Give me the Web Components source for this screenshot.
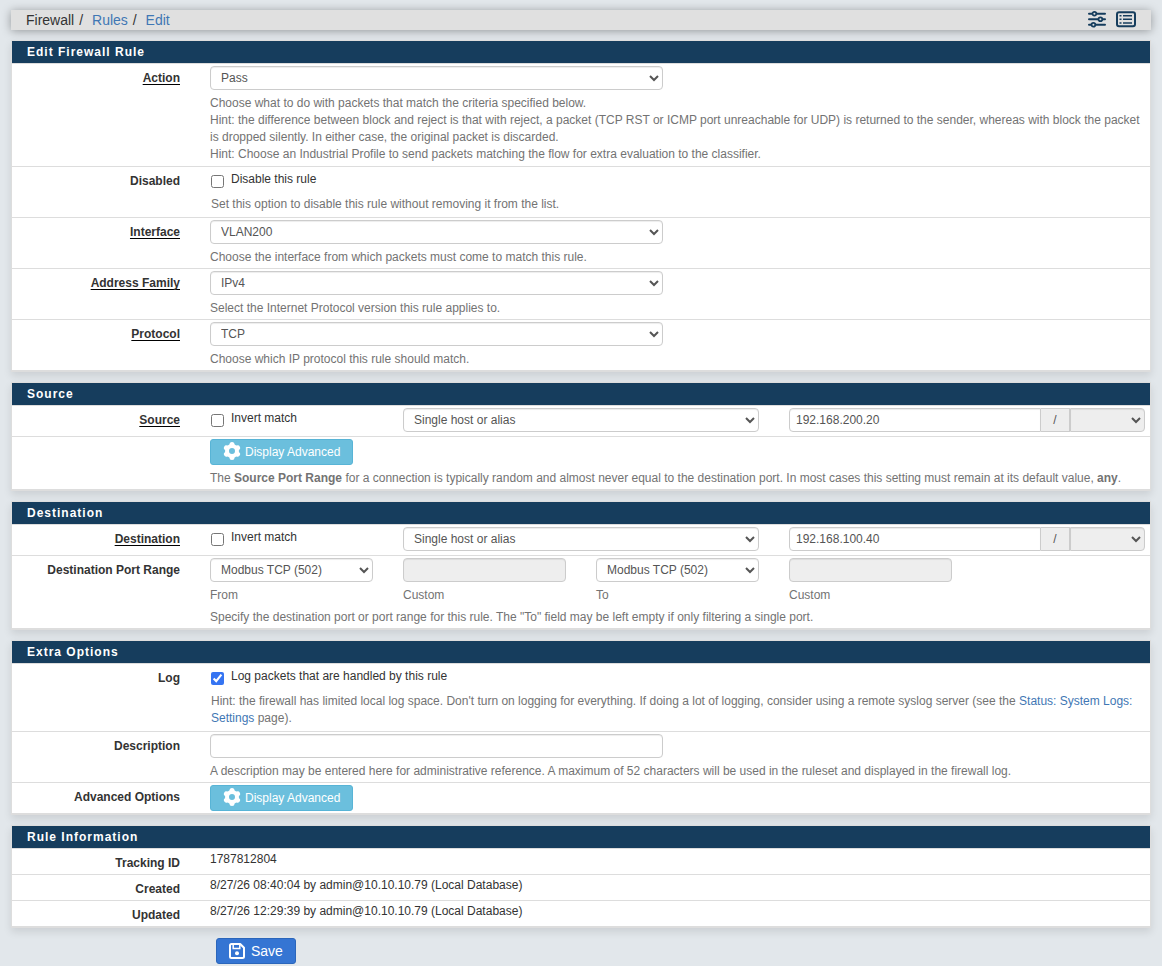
<!DOCTYPE html>
<html lang="en">
<head>
<meta charset="utf-8">
<meta name="viewport" content="width=device-width, initial-scale=1">
<title>Firewall: Rules: Edit</title>
<style>
    :root {
        --color-page: #e2e7eb;
        --color-heading: #163d5d;
        --color-line: #ddd;
        --color-text: #333;
        --color-help: #737373;
        --color-input: #555;
        --color-link: #3f77b4;
        --color-disabled: #eee;
        --input-border: 1px solid #ccc;
        --input-shadow: inset 0 1px 1px rgba(0, 0, 0, 0.075);
    }

    body {
        margin: 0;
        padding: 10px 11px 0;
        background: var(--color-page);
        color: var(--color-text);
        font: 12px/17px "Liberation Sans", Arial, sans-serif;
    }

    form {
        margin: 0;
    }

    a {
        color: var(--color-link);
        text-decoration: none;
    }
</style>
</head>
<body>
    <page-header>
        <span>Firewall</span>
        <a href="#rules">Rules</a>
        <a href="#edit">Edit</a>
    </page-header>

    <form>
        <form-panel heading="Edit Firewall Rule">
            <form-row spacious>
                <label slot="label" class="required" for="action">Action</label>
                <select id="action"><option>Pass</option><option>Block</option><option>Reject</option></select>
                <help-text>Choose what to do with packets that match the criteria specified below.<br>Hint: the difference between block and reject is that with reject, a packet (TCP RST or ICMP port unreachable for UDP) is returned to the sender, whereas with block the packet is dropped silently. In either case, the original packet is discarded.<br>Hint: Choose an Industrial Profile to send packets matching the flow for extra evaluation to the classifier.</help-text>
            </form-row>
            <form-row>
                <span slot="label">Disabled</span>
                <check-field class="full">Disable this rule
                    <help-text slot="help">Set this option to disable this rule without removing it from the list.</help-text>
                </check-field>
            </form-row>
            <form-row>
                <label slot="label" class="required" for="interface">Interface</label>
                <select id="interface"><option>VLAN200</option><option>WAN</option><option>LAN</option></select>
                <help-text>Choose the interface from which packets must come to match this rule.</help-text>
            </form-row>
            <form-row>
                <label slot="label" class="required" for="ipprotocol">Address Family</label>
                <select id="ipprotocol"><option>IPv4</option><option>IPv6</option><option>IPv4+IPv6</option></select>
                <help-text>Select the Internet Protocol version this rule applies to.</help-text>
            </form-row>
            <form-row>
                <label slot="label" class="required" for="proto">Protocol</label>
                <select id="proto"><option>TCP</option><option>UDP</option><option>Any</option></select>
                <help-text>Choose which IP protocol this rule should match.</help-text>
            </form-row>
        </form-panel>

        <form-panel heading="Source">
            <form-row>
                <label slot="label" class="required" for="srctype">Source</label>
                <check-field>Invert match</check-field>
                <select id="srctype" class="wide"><option>Single host or alias</option><option>Network</option><option>any</option></select>
                <address-field label="Source address" value="192.168.200.20"></address-field>
            </form-row>
            <form-row>
                <icon-button class="full" icon="gear">Display Advanced</icon-button>
                <help-text>The <b>Source Port Range</b> for a connection is typically random and almost never equal to the destination port. In most cases this setting must remain at its default value, <b>any</b>.</help-text>
            </form-row>
        </form-panel>

        <form-panel heading="Destination">
            <form-row>
                <label slot="label" class="required" for="dsttype">Destination</label>
                <check-field>Invert match</check-field>
                <select id="dsttype" class="wide"><option>Single host or alias</option><option>Network</option><option>any</option></select>
                <address-field label="Destination address" value="192.168.100.40"></address-field>
            </form-row>
            <form-row>
                <span slot="label">Destination Port Range</span>
                <port-field label="From" value="Modbus TCP (502)"></port-field>
                <port-field label="Custom"></port-field>
                <port-field label="To" value="Modbus TCP (502)"></port-field>
                <port-field label="Custom"></port-field>
                <help-text>Specify the destination port or port range for this rule. The "To" field may be left empty if only filtering a single port.</help-text>
            </form-row>
        </form-panel>

        <form-panel heading="Extra Options">
            <form-row>
                <span slot="label">Log</span>
                <check-field class="full" checked>Log packets that are handled by this rule
                    <help-text slot="help">Hint: the firewall has limited local log space. Don't turn on logging for everything. If doing a lot of logging, consider using a remote syslog server (see the <a href="#syslog">Status: System Logs: Settings</a> page).</help-text>
                </check-field>
            </form-row>
            <form-row>
                <label slot="label" for="descr">Description</label>
                <input id="descr" type="text" maxlength="52">
                <help-text>A description may be entered here for administrative reference. A maximum of 52 characters will be used in the ruleset and displayed in the firewall log.</help-text>
            </form-row>
            <form-row>
                <span slot="label">Advanced Options</span>
                <icon-button class="full" icon="gear">Display Advanced</icon-button>
            </form-row>
        </form-panel>

        <form-panel heading="Rule Information">
            <form-row compact>
                <span slot="label">Tracking ID</span>
                <span class="full">1787812804</span>
            </form-row>
            <form-row compact>
                <span slot="label">Created</span>
                <span class="full">8/27/26 08:40:04 by admin@10.10.10.79 (Local Database)</span>
            </form-row>
            <form-row compact>
                <span slot="label">Updated</span>
                <span class="full">8/27/26 12:29:39 by admin@10.10.10.79 (Local Database)</span>
            </form-row>
        </form-panel>

        <form-actions>
            <icon-button icon="save" primary>Save</icon-button>
        </form-actions>
    </form>

<script>
// Shared by every element that draws a text box or a drop-down
const controlStyles = `
    select, input:not([type=checkbox]) {
        box-sizing: border-box;
        width: 100%;
        min-width: 0;
        height: 24px;
        margin: 0;
        padding: 2px 6px;
        border: var(--input-border);
        border-radius: 4px;
        background-color: #fff;
        box-shadow: var(--input-shadow);
        color: var(--color-input);
        font: inherit;
    }

    select:disabled, input:disabled {
        background-color: var(--color-disabled);
        opacity: 1;
    }
`;

const icons = {
    gear: `<svg viewBox="0 0 20 20" width="20" height="20" aria-hidden="true">
        <g fill="none" stroke="currentColor">
            <circle cx="10" cy="10" r="5" stroke-width="4"/>
            <path stroke-width="5" stroke-linecap="round" d="M10 3.500v.5M10 16v.5M4.400 6.800l.4.200M15.200 13l.4.200M4.400 13.200l.4-.2M15.200 7l.4-.2"/>
        </g>
    </svg>`,
    save: `<svg viewBox="0 0 16 16" width="16" height="16" aria-hidden="true">
        <path fill="none" stroke="currentColor" stroke-width="2" stroke-linejoin="round" d="M2.500 1h8.700L15 4.800v8.700a1.500 1.500 0 0 1-1.500 1.500h-11A1.500 1.500 0 0 1 1 13.500v-11A1.500 1.500 0 0 1 2.500 1z"/>
        <path fill="none" stroke="currentColor" stroke-width="1.500" d="M4.200 1.500v4h6.600v-4"/>
        <circle cx="8" cy="10.200" r="2" fill="currentColor"/>
    </svg>`
};

class PageHeader extends HTMLElement {
    constructor() {
        super();
        this.attachShadow({ mode: 'open' });
        this.shadowRoot.innerHTML = `
            <style>
                :host {
                    display: flex;
                    align-items: center;
                    justify-content: space-between;
                    height: 20px;
                    margin-bottom: 10px;
                    padding: 0 15px;
                    background: #e0e0e0;
                    box-shadow: 0 1px 10px rgba(0, 0, 0, 0.35);
                    font-size: 14px;
                    line-height: 20px;
                }

                nav, .tools {
                    display: flex;
                }

                .tools {
                    gap: 9px;
                    color: var(--color-heading);
                }

                .tools a {
                    display: flex;
                    color: inherit;
                }

                .crumb + .crumb::before {
                    content: "/\\00a0";
                    padding: 0 5px;
                    color: var(--color-text);
                }
            </style>
            <nav aria-label="Breadcrumb"></nav>
            <div class="tools">
                <a href="#settings" aria-label="Related settings">
                    <svg viewBox="0 0 20 18" width="20" height="18" fill="none" stroke="currentColor" stroke-width="2" stroke-linecap="round">
                        <path d="M2 2.800h3M10 2.800h8M2 8.300h9M16 8.300h2M2 13.800h2M9 13.800h9"/>
                        <g stroke-width="1.800"><circle cx="7.400" cy="2.800" r="1.900"/><circle cx="13.400" cy="8.300" r="1.900"/><circle cx="6.400" cy="13.800" r="1.900"/></g>
                    </svg>
                </a>
                <a href="#logs" aria-label="Related log entries">
                    <svg viewBox="0 0 20 18" width="20" height="18" fill="none" stroke="currentColor">
                        <rect x="1" y="1.200" width="18" height="14" rx="2" stroke-width="2"/>
                        <path stroke-width="1.500" d="M7 4.700h9M7 8.300h9M7 11.900h9M3.500 4.700h2M3.500 8.300h2M3.500 11.900h2"/>
                    </svg>
                </a>
            </div>
        `;
    }

    connectedCallback() {
        // One slot per crumb, so that the separators can stay in here
        const nav = this.shadowRoot.querySelector('nav');
        [...this.children].forEach((child, i) => {
            child.slot = `crumb-${i}`;
            const crumb = document.createElement('span');
            crumb.className = 'crumb';
            crumb.innerHTML = `<slot name="crumb-${i}"></slot>`;
            nav.appendChild(crumb);
        });
    }
}

class FormPanel extends HTMLElement {
    constructor() {
        super();
        this.attachShadow({ mode: 'open' });
        this.shadowRoot.innerHTML = `
            <style>
                :host {
                    display: block;
                    margin-bottom: 10px;
                    border: 1px solid var(--color-line);
                    background: #fff;
                    box-shadow: 0 4px 8px rgba(0, 0, 0, 0.1);
                }

                h2 {
                    margin: 0;
                    padding: 0 15px;
                    border-bottom: 1px solid var(--color-line);
                    background: var(--color-heading);
                    background-clip: padding-box;
                    color: #fff;
                    font-size: 12px;
                    line-height: 22px;
                    letter-spacing: 1px;
                }
            </style>
            <h2></h2>
            <slot></slot>
        `;
    }

    connectedCallback() {
        this.shadowRoot.querySelector('h2').textContent = this.getAttribute('heading');
    }
}

class FormRow extends HTMLElement {
    constructor() {
        super();
        this.attachShadow({ mode: 'open' });
        this.shadowRoot.innerHTML = `
            <style>
                :host {
                    display: grid;
                    grid-template-columns: repeat(6, 1fr);
                    column-gap: 30px;
                    box-sizing: border-box;
                    min-height: 31px;
                    padding: 2px 5px;
                    border-bottom: 1px solid var(--color-line);
                }

                :host([compact]) {
                    min-height: 26px;
                }

                :host([spacious]) {
                    padding-bottom: 3px;
                }

                .label {
                    padding-top: 4px;
                    text-align: right;
                    font-weight: bold;
                }

                .content {
                    grid-column: 2 / -1;
                    display: grid;
                    grid-template-columns: repeat(10, 1fr);
                    column-gap: 30px;
                    align-items: start;
                    align-content: start;
                }

                ::slotted(.required) {
                    text-decoration: underline #000 1px;
                    text-underline-offset: 2px;
                    text-decoration-skip-ink: none;
                }

                ::slotted(select), ::slotted(input) {
                    grid-column: span 5;
                    box-sizing: border-box;
                    width: 100%;
                    height: 24px;
                    margin: 0;
                    padding: 2px 6px;
                    border: var(--input-border);
                    border-radius: 4px;
                    background-color: #fff;
                    box-shadow: var(--input-shadow);
                    color: var(--color-input);
                    font: inherit;
                }

                ::slotted(.wide), ::slotted(address-field) {
                    grid-column: span 4;
                }

                ::slotted(check-field), ::slotted(port-field) {
                    grid-column: span 2;
                }

                ::slotted(help-text), ::slotted(.full) {
                    grid-column: 1 / -1;
                }
            </style>
            <div class="label"><slot name="label"></slot></div>
            <div class="content"><slot></slot></div>
        `;
    }
}

class HelpText extends HTMLElement {
    constructor() {
        super();
        this.attachShadow({ mode: 'open' });
        this.shadowRoot.innerHTML = `
            <style>
                :host {
                    display: block;
                    margin-top: 5px;
                    color: var(--color-help);
                }
            </style>
            <slot></slot>
        `;
    }
}

class CheckField extends HTMLElement {
    constructor() {
        super();
        this.attachShadow({ mode: 'open' });
        this.shadowRoot.innerHTML = `
            <style>
                :host {
                    display: block;
                    padding-left: 1px;
                }

                label {
                    display: flex;
                    align-items: flex-start;
                    gap: 7px;
                    height: 22px;
                }

                input {
                    width: 13px;
                    height: 13px;
                    margin: 6px 0 0;
                    accent-color: #3574f2;
                }

                span {
                    padding-top: 2px;
                }

                ::slotted(help-text) {
                    margin-bottom: 2px;
                }
            </style>
            <label><input type="checkbox"><span><slot></slot></span></label>
            <slot name="help"></slot>
        `;
    }

    connectedCallback() {
        this.shadowRoot.querySelector('input').checked = this.hasAttribute('checked');
    }
}

class AddressField extends HTMLElement {
    constructor() {
        super();
        this.attachShadow({ mode: 'open' });
        this.shadowRoot.innerHTML = `
            <style>
                ${controlStyles}

                :host {
                    display: flex;
                }

                input:not([type=checkbox]) {
                    flex: 1;
                    border-radius: 4px 0 0 4px;
                }

                span {
                    box-sizing: border-box;
                    flex: 0 0 29px;
                    border: var(--input-border);
                    border-left: 0;
                    background: var(--color-disabled);
                    color: var(--color-input);
                    line-height: 22px;
                    text-align: center;
                }

                select {
                    flex: 0 0 75px;
                    border-radius: 0 4px 4px 0;
                }
            </style>
            <input type="text"><span>/</span><select disabled></select>
        `;
    }

    connectedCallback() {
        const label = this.getAttribute('label');
        const input = this.shadowRoot.querySelector('input');
        input.value = this.getAttribute('value');
        input.setAttribute('aria-label', label);
        this.shadowRoot.querySelector('select').setAttribute('aria-label', `${label} mask`);
    }
}

// A drop-down when it has a value, otherwise a disabled box for a custom port
class PortField extends HTMLElement {
    constructor() {
        super();
        this.attachShadow({ mode: 'open' });
    }

    connectedCallback() {
        const value = this.getAttribute('value');
        const control = value
            ? `<select id="port"><option>${value}</option><option>(other)</option></select>`
            : '<input id="port" type="text" disabled>';

        this.shadowRoot.innerHTML = `
            <style>
                ${controlStyles}

                :host {
                    display: block;
                }

                label {
                    display: block;
                    margin-top: 5px;
                    color: var(--color-help);
                }
            </style>
            ${control}
            <label for="port">${this.getAttribute('label')}</label>
        `;
    }
}

class IconButton extends HTMLElement {
    constructor() {
        super();
        this.attachShadow({ mode: 'open' });
    }

    connectedCallback() {
        this.shadowRoot.innerHTML = `
            <style>
                :host {
                    display: flex;
                }

                button {
                    display: flex;
                    align-items: center;
                    gap: 3px;
                    height: 26px;
                    margin: 0;
                    padding: 0 12px 0 11px;
                    border: 1px solid #58b4d6;
                    border-radius: 3px;
                    background: #6bbfdd;
                    color: #fff;
                    font: inherit;
                }

                svg {
                    margin-bottom: 2px;
                }

                :host([primary]) button {
                    gap: 6px;
                    padding: 0 12px;
                    border-color: #2b66bb;
                    background: #3575d3;
                    font-size: 14px;
                }

                :host([primary]) svg {
                    margin: 0;
                }
            </style>
            <button type="button">${icons[this.getAttribute('icon')]}<slot></slot></button>
        `;
    }
}

class FormActions extends HTMLElement {
    constructor() {
        super();
        this.attachShadow({ mode: 'open' });
        this.shadowRoot.innerHTML = `
            <style>
                :host {
                    display: grid;
                    grid-template-columns: repeat(6, 1fr);
                    column-gap: 30px;
                    padding: 0 6px;
                }

                div {
                    grid-column: 2 / -1;
                    padding-left: 6px;
                }
            </style>
            <div><slot></slot></div>
        `;
    }
}

customElements.define('page-header', PageHeader);
customElements.define('form-panel', FormPanel);
customElements.define('form-row', FormRow);
customElements.define('help-text', HelpText);
customElements.define('check-field', CheckField);
customElements.define('address-field', AddressField);
customElements.define('port-field', PortField);
customElements.define('icon-button', IconButton);
customElements.define('form-actions', FormActions);
</script>
</body>
</html>
